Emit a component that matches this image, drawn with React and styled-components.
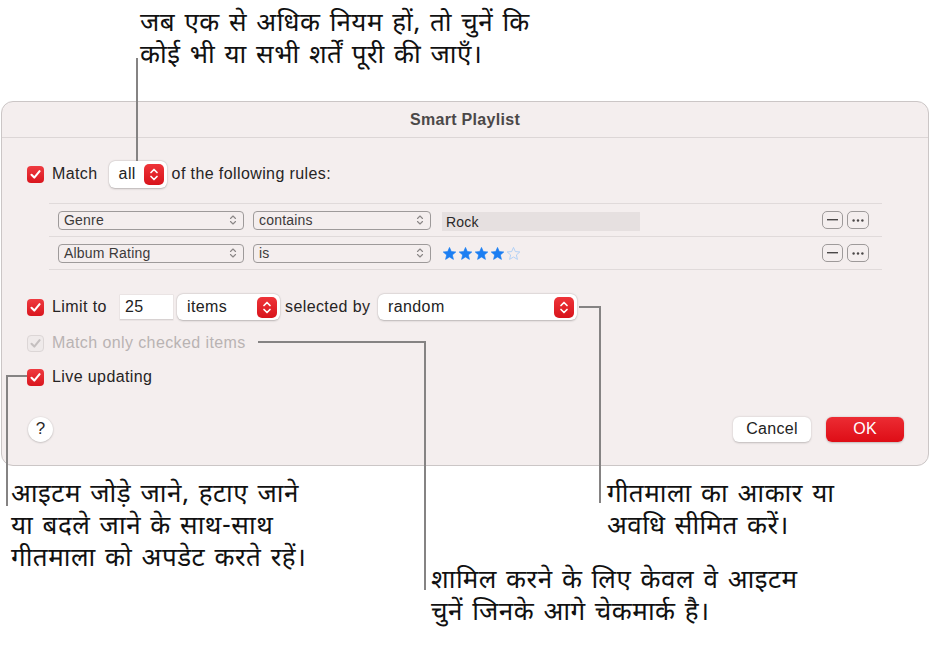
import React from "react";
import styled, { createGlobalStyle } from "styled-components";

const GlobalStyle = createGlobalStyle`
  html, body {
    margin: 0;
    padding: 0;
    background: #ffffff;
  }
  body {
    font-family: "Liberation Sans", Arial, sans-serif;
  }
`;

const rules = [
  { id: 1, field: "Genre", op: "contains", value: "Rock" },
  { id: 2, field: "Album Rating", op: "is", stars: 4 },
];

const Page = styled.div`
  position: relative;
  width: 931px;
  height: 646px;
  overflow: hidden;
`;

const Note = styled.div`
  font-family: "Noto Sans Devanagari", "Lohit Devanagari", "FreeSans", "Noto Sans", sans-serif;
  font-size: 26px;
  letter-spacing: 0.5px;
  word-spacing: 2px;
  line-height: 32px;
  color: #111;
  white-space: nowrap;
`;

const TopNote = styled(Note)`
  padding: 9px 0 0 140px;
  height: 64px;
`;

/* ===================== dialog ===================== */
const Dialog = styled.div`
  margin: 28px 0 0 1px;
  width: 926px;
  height: 363px;
  border: 1px solid #cbc6c6;
  border-radius: 12px;
  background: #f4eeee;
  display: flex;
  flex-direction: column;
`;

const TitleBar = styled.div`
  height: 35px;
  border-bottom: 1px solid #dcd6d6;
  display: flex;
  align-items: center;
  justify-content: center;
  font-weight: bold;
  font-size: 16px;
  letter-spacing: 0.3px;
  color: #4b4848;
`;

const Body = styled.div`
  padding: 22px 24px 0 25px;
  display: flex;
  flex-direction: column;
`;

const Row = styled.div`
  display: flex;
  align-items: center;
  height: ${(p) => p.h || 18}px;
  margin-top: ${(p) => p.mt || 0}px;
  font-size: 16px;
  letter-spacing: 0.4px;
  color: ${(p) => (p.disabled ? "#b9b3b3" : "#262424")};
`;

const Label = styled.span`
  flex: none;
`;

const LimitLabel = styled.span`
  width: 68px;
  flex: none;
`;

const ByLabel = styled.span`
  width: 98px;
  flex: none;
  box-sizing: border-box;
  padding-left: 5px;
`;

const Box = styled.span`
  width: 17px;
  height: 17px;
  border-radius: 4px;
  flex: none;
  display: flex;
  align-items: center;
  justify-content: center;
  background: ${(p) =>
    p.disabled ? "#efeaea" : "linear-gradient(#ef3b41, #d9151d)"};
  border: ${(p) => (p.disabled ? "1px solid #dcd6d6" : "none")};
  box-sizing: border-box;
  margin-right: 8px;
`;

const Check = ({ disabled }) => (
  <Box disabled={disabled}>
    <svg width="13" height="13" viewBox="0 0 13 13">
      <path
        d="M2.5 6.8 L5.3 9.6 L10.6 3.2"
        fill="none"
        stroke={disabled ? "#c4bfbf" : "#fff"}
        strokeWidth="2.1"
        strokeLinecap="round"
        strokeLinejoin="round"
      />
    </svg>
  </Box>
);

const Popup = styled.div`
  display: flex;
  align-items: center;
  justify-content: space-between;
  box-sizing: border-box;
  flex: none;
  width: ${(p) => p.w}px;
  height: ${(p) => p.h || 26}px;
  padding: 0 3px 0 ${(p) => p.pl || 10}px;
  background: #fff;
  border-radius: 6px;
  box-shadow: 0 0.5px 2px rgba(0, 0, 0, 0.22), 0 0 0 0.5px rgba(0, 0, 0, 0.06);
  color: #222;
  margin: 0 ${(p) => p.mr || 0}px 0 ${(p) => p.ml || 0}px;
`;

const Stepper = styled.span`
  width: 20px;
  height: 21px;
  border-radius: 5px;
  background: linear-gradient(#ee3439, #d8141c);
  display: flex;
  align-items: center;
  justify-content: center;
`;

const RedStepper = () => (
  <Stepper>
    <svg width="20" height="21" viewBox="0 0 20 21">
      <path
        d="M7 8.5 L10 5.5 L13 8.5 M7 12.5 L10 15.5 L13 12.5"
        fill="none"
        stroke="#fff"
        strokeWidth="1.7"
        strokeLinecap="round"
        strokeLinejoin="round"
      />
    </svg>
  </Stepper>
);

const NumField = styled.div`
  width: 53px;
  height: 25px;
  flex: none;
  box-sizing: border-box;
  background: #fff;
  border-bottom: 1px solid #d8d2d2;
  box-shadow: 0 0 0 0.5px rgba(0, 0, 0, 0.08);
  padding-left: 5px;
  display: flex;
  align-items: center;
  margin-right: 4px;
  color: #222;
`;

/* ===================== rules ===================== */
const RuleList = styled.div`
  margin: 15px 0 0 22px;
  width: 833px;
  border-top: 1px solid #e0dada;
`;

const RuleRow = styled.div`
  height: 32px;
  border-bottom: 1px solid #e0dada;
  display: flex;
  align-items: center;
  padding-left: 9px;
  padding-right: 13px;
`;

const SmallPopup = styled.div`
  width: ${(p) => p.w}px;
  height: 19px;
  box-sizing: border-box;
  border: 1px solid #9e9a9a;
  border-radius: 4px;
  padding: 0 6px 0 5px;
  display: flex;
  align-items: center;
  justify-content: space-between;
  font-size: 14px;
  letter-spacing: 0.2px;
  color: #3c3a3a;
  margin-right: ${(p) => p.mr || 0}px;
`;

const Chevrons = () => (
  <svg width="8" height="12" viewBox="0 0 8 12">
    <path
      d="M1.5 4.5 L4 2 L6.5 4.5 M1.5 7.5 L4 10 L6.5 7.5"
      fill="none"
      stroke="#8a8686"
      strokeWidth="1.1"
      strokeLinecap="round"
      strokeLinejoin="round"
    />
  </svg>
);

const TextField = styled.div`
  width: 198px;
  height: 19px;
  background: #e6e0e0;
  font-size: 14px;
  letter-spacing: 0.2px;
  color: #2a2828;
  padding-left: 4px;
  box-sizing: border-box;
  display: flex;
  align-items: center;
  margin-top: 3px;
`;

const Stars = styled.div`
  display: flex;
  gap: 1px;
  margin-top: 1px;
`;

const Star = ({ filled }) => (
  <svg width="15" height="15" viewBox="0 0 24 24">
    <path
      d="M12 2.2 L14.9 8.9 L22.1 9.5 L16.6 14.3 L18.3 21.4 L12 17.6 L5.7 21.4 L7.4 14.3 L1.9 9.5 L9.1 8.9 Z"
      fill={filled ? "#1c7ef2" : "none"}
      stroke={filled ? "#1c7ef2" : "#a9cdf7"}
      strokeWidth={filled ? 1 : 1.4}
      strokeLinejoin="round"
    />
  </svg>
);

const Spacer = styled.div`
  flex: 1;
`;

const IconBtn = styled.div`
  width: ${(p) => p.w || 21}px;
  height: 18px;
  box-sizing: border-box;
  border: 1px solid #9e9a9a;
  border-radius: 5px;
  display: flex;
  align-items: center;
  justify-content: center;
  margin-left: ${(p) => p.ml || 0}px;
`;

/* ===================== footer ===================== */
const Footer = styled.div`
  display: flex;
  align-items: center;
  margin-top: 30px;
  height: 26px;
`;

const HelpBtn = styled.div`
  width: 25px;
  height: 25px;
  border-radius: 50%;
  background: #fff;
  box-shadow: 0 0.5px 2px rgba(0, 0, 0, 0.28);
  display: flex;
  align-items: center;
  justify-content: center;
  font-size: 17px;
  color: #2a2828;
  margin-left: 1px;
`;

const Button = styled.div`
  width: 78px;
  height: 25px;
  border-radius: 6px;
  display: flex;
  align-items: center;
  justify-content: center;
  font-size: 16px;
  letter-spacing: 0.3px;
  margin-left: ${(p) => p.ml || 0}px;
  background: ${(p) => (p.primary ? "linear-gradient(#ec2c33, #de0d16)" : "#fff")};
  color: ${(p) => (p.primary ? "#fff" : "#222")};
  box-shadow: 0 0.5px 2px rgba(0, 0, 0, 0.22);
`;

/* ===================== bottom notes ===================== */
const BottomNotes = styled.div`
  display: grid;
  grid-template-columns: 420px 176px 1fr;
  grid-template-rows: 64px auto;
  margin-top: 14px;
  padding-left: 11px;
`;

const NoteCell = styled(Note)`
  grid-column: ${(p) => p.col};
  grid-row: ${(p) => p.row};
  margin-top: ${(p) => p.mt || 0}px;
`;

/* ===================== callout lines ===================== */
const Lines = styled.svg`
  position: absolute;
  left: 0;
  top: 0;
  pointer-events: none;
`;

const Callouts = () => (
  <Lines width="931" height="646" viewBox="0 0 931 646">
    <g fill="none" stroke="#858383" strokeWidth="2">
      <path d="M137 58 V161" />
      <path d="M579 307 H600 V503" />
      <path d="M258 342 H425 V590" />
      <path d="M27 376 H7 V506" />
    </g>
  </Lines>
);

const App = () => {
  return (
    <Page>
      <GlobalStyle />
      <TopNote>
        जब एक से अधिक नियम हों, तो चुनें कि
        <br />
        कोई भी या सभी शर्तें पूरी की जाएँ।
      </TopNote>

      <Dialog>
        <TitleBar>Smart Playlist</TitleBar>
        <Body>
          <Row h={28}>
            <Check />
            <Label>Match</Label>
            <Popup w={58} h={27} pl={10} ml={11} mr={5}>
              all
              <RedStepper />
            </Popup>
            <Label>of the following rules:</Label>
          </Row>

          <RuleList>
            {rules.map((r) => (
              <RuleRow key={r.id}>
                <SmallPopup w={186} mr={9}>
                  {r.field}
                  <Chevrons />
                </SmallPopup>
                <SmallPopup w={178} mr={11}>
                  {r.op}
                  <Chevrons />
                </SmallPopup>
                {r.value ? (
                  <TextField>{r.value}</TextField>
                ) : (
                  <Stars>
                    {[0, 1, 2, 3, 4].map((i) => (
                      <Star key={i} filled={i < r.stars} />
                    ))}
                  </Stars>
                )}
                <Spacer />
                <IconBtn>
                  <svg width="11" height="2" viewBox="0 0 11 2">
                    <rect width="11" height="1.4" fill="#4a4747" />
                  </svg>
                </IconBtn>
                <IconBtn w={22} ml={4}>
                  <svg width="12" height="3" viewBox="0 0 12 3">
                    <circle cx="1.6" cy="1.5" r="1.2" fill="#4a4747" />
                    <circle cx="6" cy="1.5" r="1.2" fill="#4a4747" />
                    <circle cx="10.4" cy="1.5" r="1.2" fill="#4a4747" />
                  </svg>
                </IconBtn>
              </RuleRow>
            ))}
          </RuleList>

          <Row h={26} mt={24}>
            <Check />
            <LimitLabel>Limit to</LimitLabel>
            <NumField>25</NumField>
            <Popup w={103}>
              items
              <RedStepper />
            </Popup>
            <ByLabel>selected by</ByLabel>
            <Popup w={199}>
              random
              <RedStepper />
            </Popup>
          </Row>

          <Row mt={14} disabled>
            <Check disabled />
            <Label>Match only checked items</Label>
          </Row>

          <Row mt={16}>
            <Check />
            <Label>Live updating</Label>
          </Row>

          <Footer>
            <HelpBtn>?</HelpBtn>
            <Spacer />
            <Button>Cancel</Button>
            <Button primary ml={15}>
              OK
            </Button>
          </Footer>
        </Body>
      </Dialog>

      <BottomNotes>
        <NoteCell col="1" row="1 / span 2">
          आइटम जोड़े जाने, हटाए जाने
          <br />
          या बदले जाने के साथ-साथ
          <br />
          गीतमाला को अपडेट करते रहें।
        </NoteCell>
        <NoteCell col="3" row="1">
          गीतमाला का आकार या
          <br />
          अवधि सीमित करें।
        </NoteCell>
        <NoteCell col="2 / span 2" row="2" mt={22}>
          शामिल करने के लिए केवल वे आइटम
          <br />
          चुनें जिनके आगे चेकमार्क है।
        </NoteCell>
      </BottomNotes>

      <Callouts />
    </Page>
  );
};

export default App;
